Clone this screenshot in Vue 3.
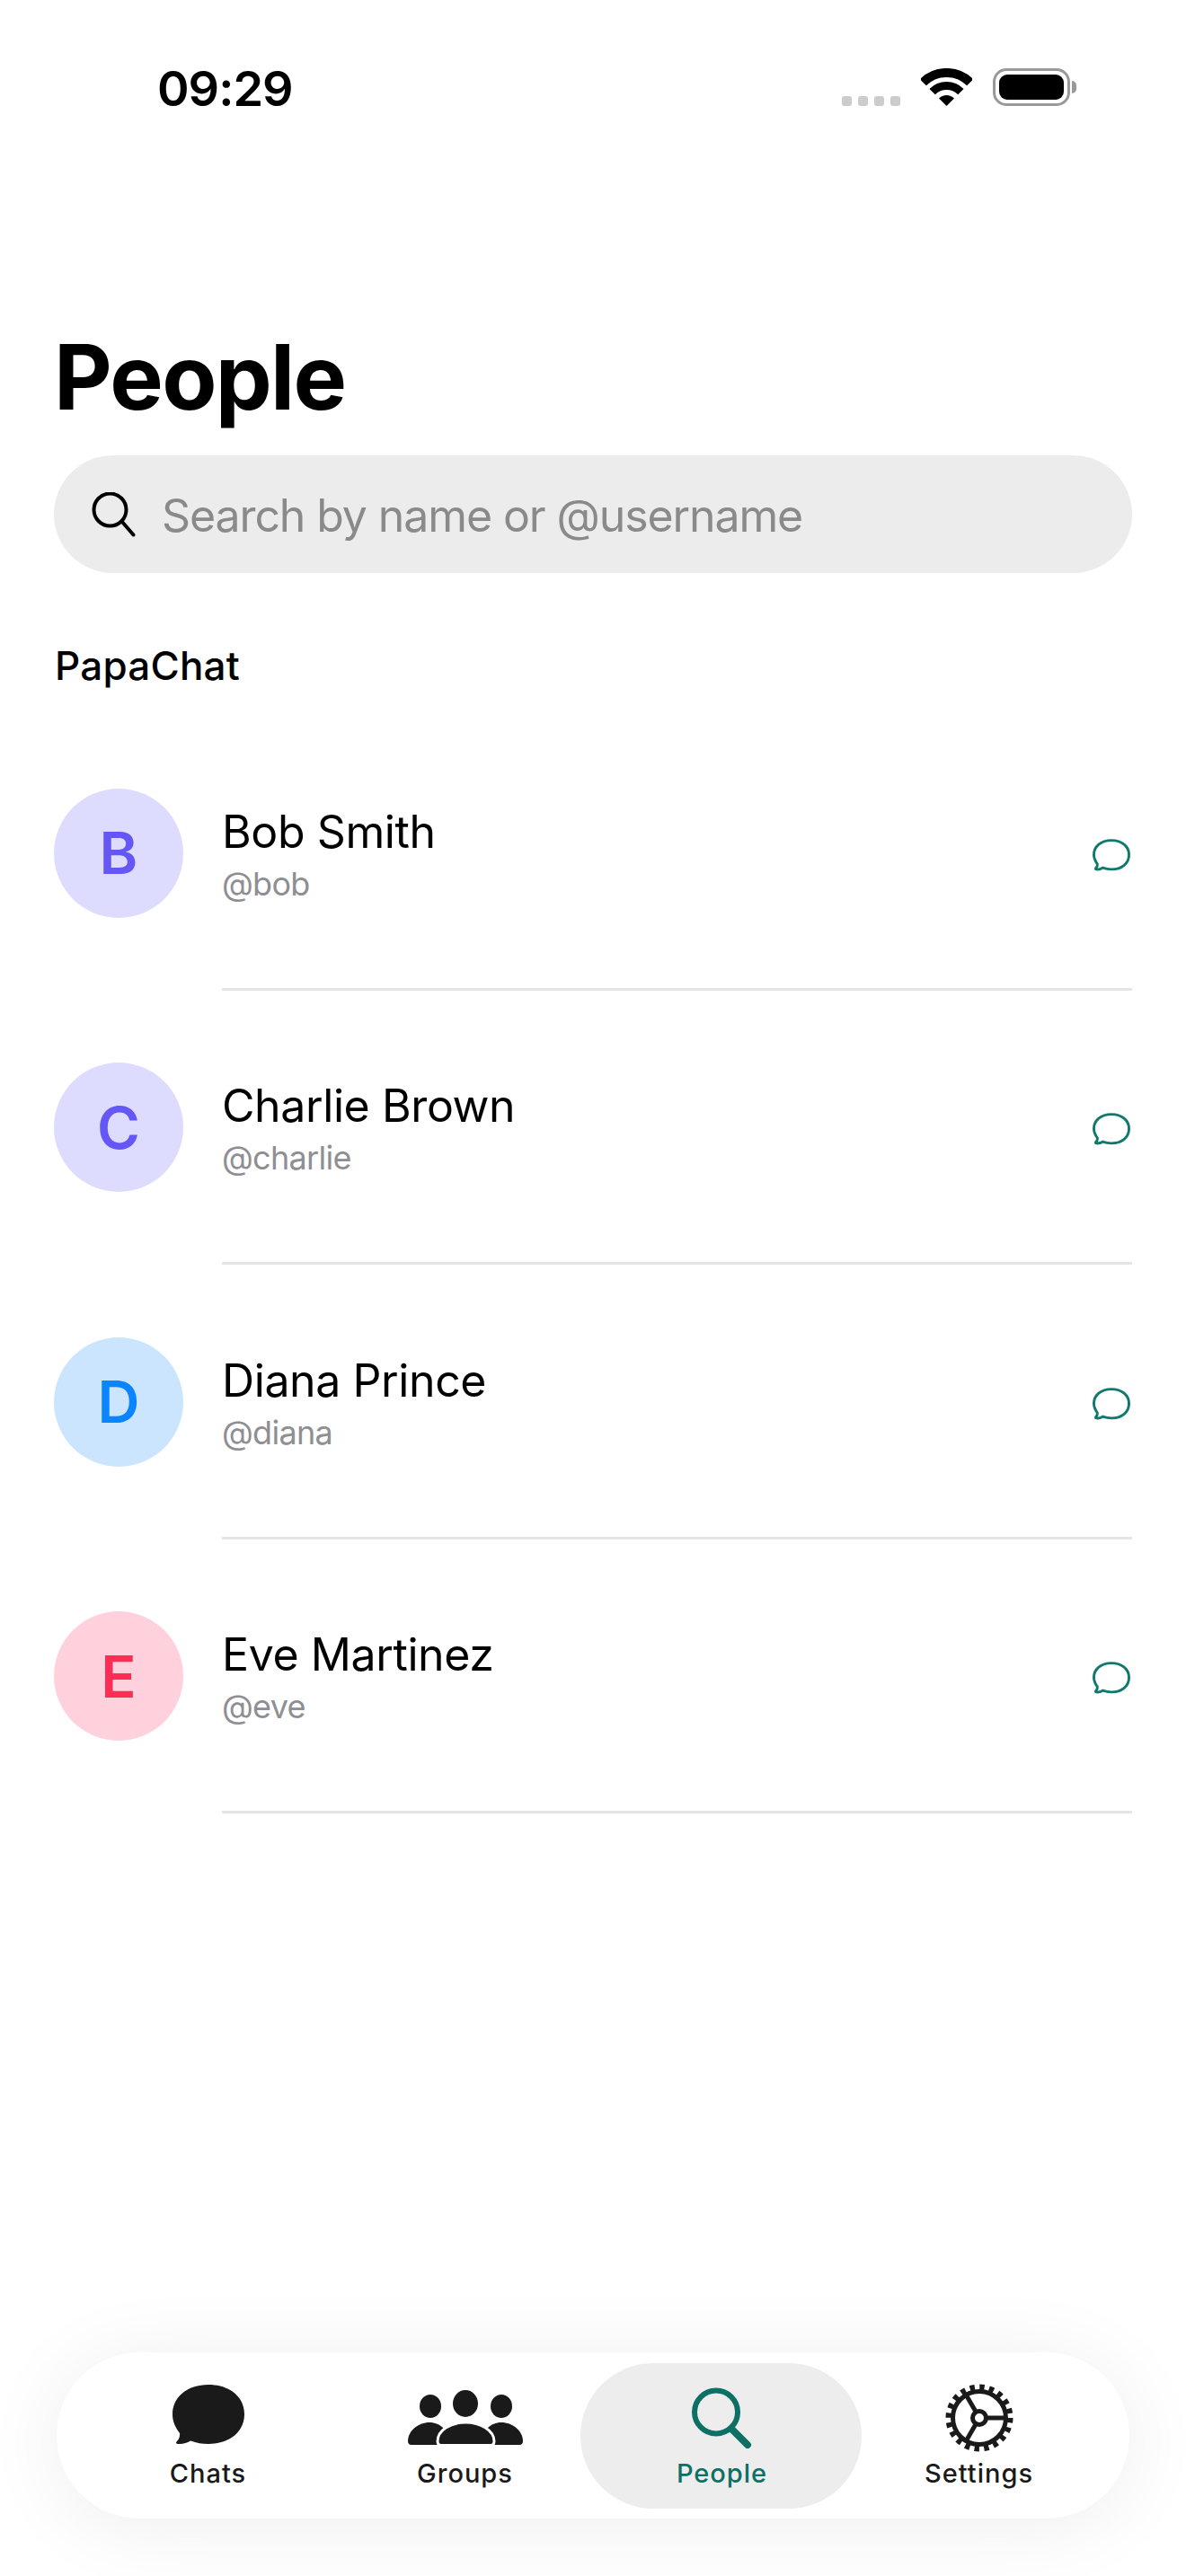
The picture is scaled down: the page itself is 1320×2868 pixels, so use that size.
<script setup>
const people = [
  { name: 'Bob Smith', handle: '@bob', initial: 'B', tone: 'violet' },
  { name: 'Charlie Brown', handle: '@charlie', initial: 'C', tone: 'violet' },
  { name: 'Diana Prince', handle: '@diana', initial: 'D', tone: 'blue' },
  { name: 'Eve Martinez', handle: '@eve', initial: 'E', tone: 'pink' }
]
const bubble = 'M40 0C64 0 80 14 80 33C80 52 64 66 40 66C33 66 27 65 20 62.500C16 65 11 66.500 6 66C4 66 3.500 65 4.500 63.500C7 61 8.500 58 8 54C3 47 0 41 0 33C0 14 16 0 40 0Z'
</script>

<template>
  <div class="page">
    <div class="status">
      <span class="time">09:29</span>
      <div class="status-icons">
        <div class="dots"><i></i><i></i><i></i><i></i></div>
        <svg class="wifi" width="57" height="42" viewBox="0 0 57 42">
          <path d="M2.3 15.8A37 37 0 0 1 54.7 15.8" fill="none" stroke="#000" stroke-width="10" />
          <path d="M12.6 26.1A22.5 22.5 0 0 1 44.4 26.1" fill="none" stroke="#000" stroke-width="9" />
          <path d="M28.5 42L20 33.5A12 12 0 0 1 37 33.5Z" fill="#000" />
        </svg>
        <div class="battery"><div class="battery-fill"></div></div>
        <div class="battery-nub"></div>
      </div>
    </div>

    <h1 class="title">People</h1>

    <div class="search">
      <svg width="50" height="50" viewBox="0 0 50 50" fill="none" stroke="#000" stroke-width="4" stroke-linecap="round">
        <circle cx="20.5" cy="19.5" r="18" />
        <path d="M34 33L46.500 47.500" />
      </svg>
      <span class="placeholder">Search by name or @username</span>
    </div>

    <div class="section">PapaChat</div>

    <div class="list">
      <div v-for="person in people" :key="person.handle" class="row">
        <div class="avatar" :class="person.tone">{{ person.initial }}</div>
        <div class="row-main">
          <div class="who">
            <div class="name">{{ person.name }}</div>
            <div class="handle">{{ person.handle }}</div>
          </div>
          <svg class="chat" width="42" height="36" viewBox="-3 -3 86 73">
            <path :d="bubble" fill="none" stroke="#0f7a6c" stroke-width="6" />
          </svg>
        </div>
      </div>
    </div>

    <div class="tabbar">
      <div class="tab">
        <div class="tab-icon">
          <svg class="bubble" width="80" height="67" viewBox="0 0 80 67"><path :d="bubble" fill="#1a1a1a" /></svg>
        </div>
        <span>Chats</span>
      </div>
      <div class="tab">
        <div class="tab-icon">
          <svg width="128" height="62" viewBox="0 0 128 62" fill="#1a1a1a">
            <ellipse cx="25" cy="18" rx="12" ry="13" />
            <ellipse cx="104" cy="18" rx="12" ry="13" />
            <ellipse cx="64" cy="15" rx="14" ry="15" />
            <path d="M0 57C0 45 12 36 24 36C36 36 46 45 46 61H4C1 61 0 59 0 57Z" />
            <path d="M128 57C128 45 116 36 104 36C92 36 82 45 82 61H124C127 61 128 59 128 57Z" />
            <path d="M33 57C33 45 47 36 64 36C81 36 96 45 96 57C96 60 95 61.500 92 61.500H37C34 61.500 33 60 33 57Z" stroke="#fff" stroke-width="3" />
          </svg>
        </div>
        <span>Groups</span>
      </div>
      <div class="tab active">
        <div class="tab-icon">
          <svg width="68" height="68" viewBox="0 0 68 68" fill="none" stroke="#0c7064" stroke-linecap="round">
            <circle cx="27" cy="27.500" r="24" stroke-width="6" />
            <path d="M44 46L62 64" stroke-width="8" />
          </svg>
        </div>
        <span>People</span>
      </div>
      <div class="tab">
        <div class="tab-icon">
          <svg width="76" height="76" viewBox="0 0 76 76" fill="none" stroke="#1a1a1a">
            <circle cx="38" cy="38" r="34" stroke-width="7" stroke-dasharray="5.340 5.340" />
            <circle cx="38" cy="38" r="29.500" stroke-width="5" />
            <circle cx="38" cy="38" r="7.500" stroke-width="5" />
            <path d="M46 38H66M34 31L23 12M34 45L23 64" stroke-width="5" />
          </svg>
        </div>
        <span>Settings</span>
      </div>
    </div>
  </div>
</template>

<style>
body {
  background: #fff;
}
</style>

<style scoped>
.page {
  position: relative;
  width: 1320px;
  height: 2868px;
  overflow: hidden;
  background: #fff;
  color: #000;
  font-family: Inter, "Liberation Sans", sans-serif;
}
.status {
  display: flex;
  align-items: center;
  justify-content: space-between;
  box-sizing: border-box;
  height: 194px;
  padding: 0 122px 0 175px;
}
.time {
  margin-top: 2px;
  font-size: 54px;
  font-weight: 600;
  letter-spacing: -1px;
}
.status-icons {
  display: flex;
  align-items: flex-end;
}
.dots {
  display: flex;
  gap: 7px;
  margin-right: 23px;
}
.dots i {
  width: 11px;
  height: 11px;
  border-radius: 3px;
  background: #ccc;
}
.wifi {
  margin-right: 23px;
}
.battery {
  width: 86px;
  height: 42px;
  padding: 4px;
  box-sizing: border-box;
  border: 3px solid #999;
  border-radius: 15px;
}
.battery-fill {
  height: 100%;
  border-radius: 9px;
  background: #000;
}
.battery-nub {
  width: 5px;
  height: 14px;
  margin: 0 0 14px 2px;
  border-radius: 0 5px 5px 0;
  background: #999;
}
.title {
  margin: 166px 0 0 60px;
  font-size: 100px;
  line-height: 120px;
  font-weight: 700;
  letter-spacing: -1.7px;
}
.search {
  display: flex;
  align-items: center;
  gap: 28px;
  height: 131px;
  margin: 27px 60px 0;
  padding-left: 42px;
  border-radius: 66px;
  background: #ececec;
}
.placeholder {
  padding-top: 2px;
  font-size: 50px;
  letter-spacing: -1.1px;
  color: #8a8a8a;
}
.section {
  margin: 78px 0 0 61px;
  font-size: 44px;
  line-height: 50px;
  font-weight: 500;
  letter-spacing: 0.2px;
}
.list {
  margin-top: 31px;
}
.row {
  display: flex;
  align-items: center;
  height: 305.5px;
  padding: 0 60px;
}
.avatar {
  display: flex;
  align-items: center;
  justify-content: center;
  flex-shrink: 0;
  width: 144px;
  height: 144px;
  margin-right: 43px;
  border-radius: 50%;
  font-size: 65px;
  font-weight: 600;
}
.violet {
  background: #dedcfe;
  color: #6457f5;
}
.blue {
  background: #cce5ff;
  color: #0a84ff;
}
.pink {
  background: #ffd1dc;
  color: #ff2d55;
}
.row-main {
  display: flex;
  align-items: center;
  justify-content: space-between;
  flex: 1;
  align-self: stretch;
  box-sizing: border-box;
  border-bottom: 3px solid #e5e5e5;
}
.who {
  padding-top: 5px;
}
.name {
  font-size: 50px;
  line-height: 60px;
  letter-spacing: -0.4px;
}
.handle {
  margin-top: 6px;
  font-size: 36px;
  line-height: 44px;
  letter-spacing: -0.7px;
  color: #8e8e93;
}
.chat {
  margin: 7px 2px 0 0;
}
.tabbar {
  position: absolute;
  left: 63px;
  top: 2619px;
  display: grid;
  grid-template-columns: repeat(4, 286px);
  box-sizing: border-box;
  width: 1194px;
  height: 185px;
  padding-left: 25.5px;
  border-radius: 93px;
  background: #fff;
  box-shadow: 0 8px 90px rgba(0, 0, 0, 0.07);
}
.tab {
  position: relative;
  display: flex;
  flex-direction: column;
  align-items: center;
  font-size: 29px;
  font-weight: 500;
  letter-spacing: 1px;
  color: #1a1a1a;
}
.tab-icon {
  display: flex;
  align-items: center;
  justify-content: center;
  height: 76px;
  margin-top: 35px;
}
.tab span {
  position: relative;
  margin-top: 6px;
  line-height: 36px;
}
.tab svg {
  position: relative;
}
.tab .bubble {
  margin-bottom: 7px;
}
.active {
  color: #0c7064;
}
.active::before {
  content: "";
  position: absolute;
  left: -14.5px;
  right: -12.5px;
  top: 12px;
  bottom: 11px;
  border-radius: 81px;
  background: #ededed;
}
</style>
